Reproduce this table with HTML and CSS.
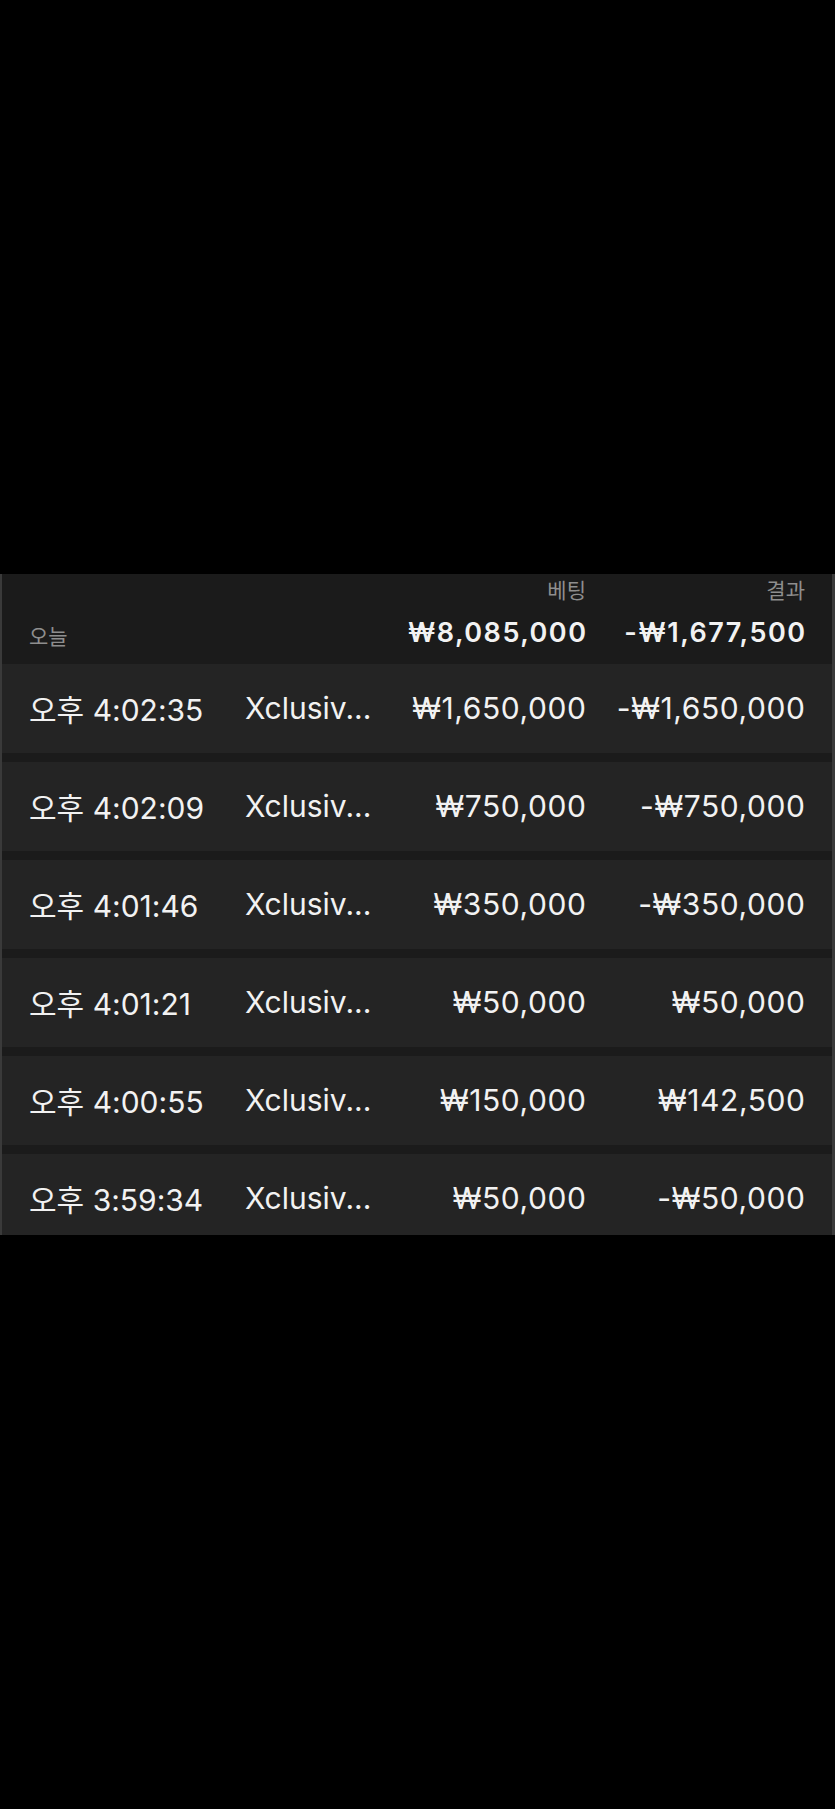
FILE: index.html
```html
<!DOCTYPE html>
<html lang="ko">
<head>
<meta charset="utf-8">
<title>베팅 내역</title>
<link rel="stylesheet" href="styles.css">
</head>
<body>
<div class="screen">
  <div class="top-space"></div>
  <section class="history">
    <div class="summary">
      <div class="labels">
        <span class="label c-bet">베팅</span>
        <span class="label c-res">결과</span>
      </div>
      <div class="totals">
        <span class="day">오늘</span>
        <span class="total c-bet">₩8,085,000</span>
        <span class="total c-res">-₩1,677,500</span>
      </div>
    </div>
    <div class="rows">
      <div class="row"><span class="time">오후 4:02:35</span><span class="name">Xclusiv...</span><span class="amt">₩1,650,000</span><span class="amt">-₩1,650,000</span></div>
      <div class="row"><span class="time">오후 4:02:09</span><span class="name">Xclusiv...</span><span class="amt">₩750,000</span><span class="amt">-₩750,000</span></div>
      <div class="row"><span class="time">오후 4:01:46</span><span class="name">Xclusiv...</span><span class="amt">₩350,000</span><span class="amt">-₩350,000</span></div>
      <div class="row"><span class="time">오후 4:01:21</span><span class="name">Xclusiv...</span><span class="amt">₩50,000</span><span class="amt">₩50,000</span></div>
      <div class="row"><span class="time">오후 4:00:55</span><span class="name">Xclusiv...</span><span class="amt">₩150,000</span><span class="amt">₩142,500</span></div>
      <div class="row"><span class="time">오후 3:59:34</span><span class="name">Xclusiv...</span><span class="amt">₩50,000</span><span class="amt">-₩50,000</span></div>
    </div>
  </section>
</div>
</body>
</html>
```

FILE: styles.css
```css
html, body {
  margin: 0;
  padding: 0;
  background: #000;
}
body {
  font-family: "Inter", "Noto Sans CJK KR", sans-serif;
  color: #f2f2f2;
}
.screen {
  width: 835px;
  height: 1809px;
  display: flex;
  flex-direction: column;
}
.top-space {
  height: 574px;
  flex: none;
}
.history {
  height: 661px;
  overflow: hidden;
  background: #1b1b1b;
  border-left: 2px solid #3a3a3a;
  border-right: 3px solid #3a3a3a;
  box-sizing: border-box;
}
.summary {
  height: 90px;
  box-sizing: border-box;
  padding: 1px 27px 0 27px;
}
.labels, .totals, .row {
  display: grid;
  grid-template-columns: 216px 130px 211px 219px;
}
.labels .c-bet { grid-column: 3; }
.labels .c-res { grid-column: 4; }
.label {
  font-family: "Noto Sans CJK KR", sans-serif;
  font-size: 21px;
  line-height: 28px;
  color: #8e8e8e;
  text-align: right;
}
.totals {
  margin-top: 14px;
  align-items: baseline;
}
.day {
  grid-column: 1;
  font-family: "Noto Sans CJK KR", sans-serif;
  font-size: 21px;
  color: #8e8e8e;
  line-height: 32px;
  position: relative;
  top: 2px;
}
.totals .c-bet { grid-column: 3; }
.totals .c-res { grid-column: 4; }
.total {
  font-size: 27px;
  font-weight: 600;
  letter-spacing: 1.5px;
  line-height: 32px;
  text-align: right;
  margin-right: -1.5px;
}
.rows {
  display: flex;
  flex-direction: column;
  gap: 9px;
}
.row {
  height: 89px;
  box-sizing: border-box;
  align-items: center;
  background: #242424;
  padding: 0 27px 2px 27px;
  font-size: 30px;
}
.time, .name, .amt {
  white-space: nowrap;
}
.amt {
  text-align: right;
  letter-spacing: 0.6px;
  margin-right: -0.6px;
}
```
